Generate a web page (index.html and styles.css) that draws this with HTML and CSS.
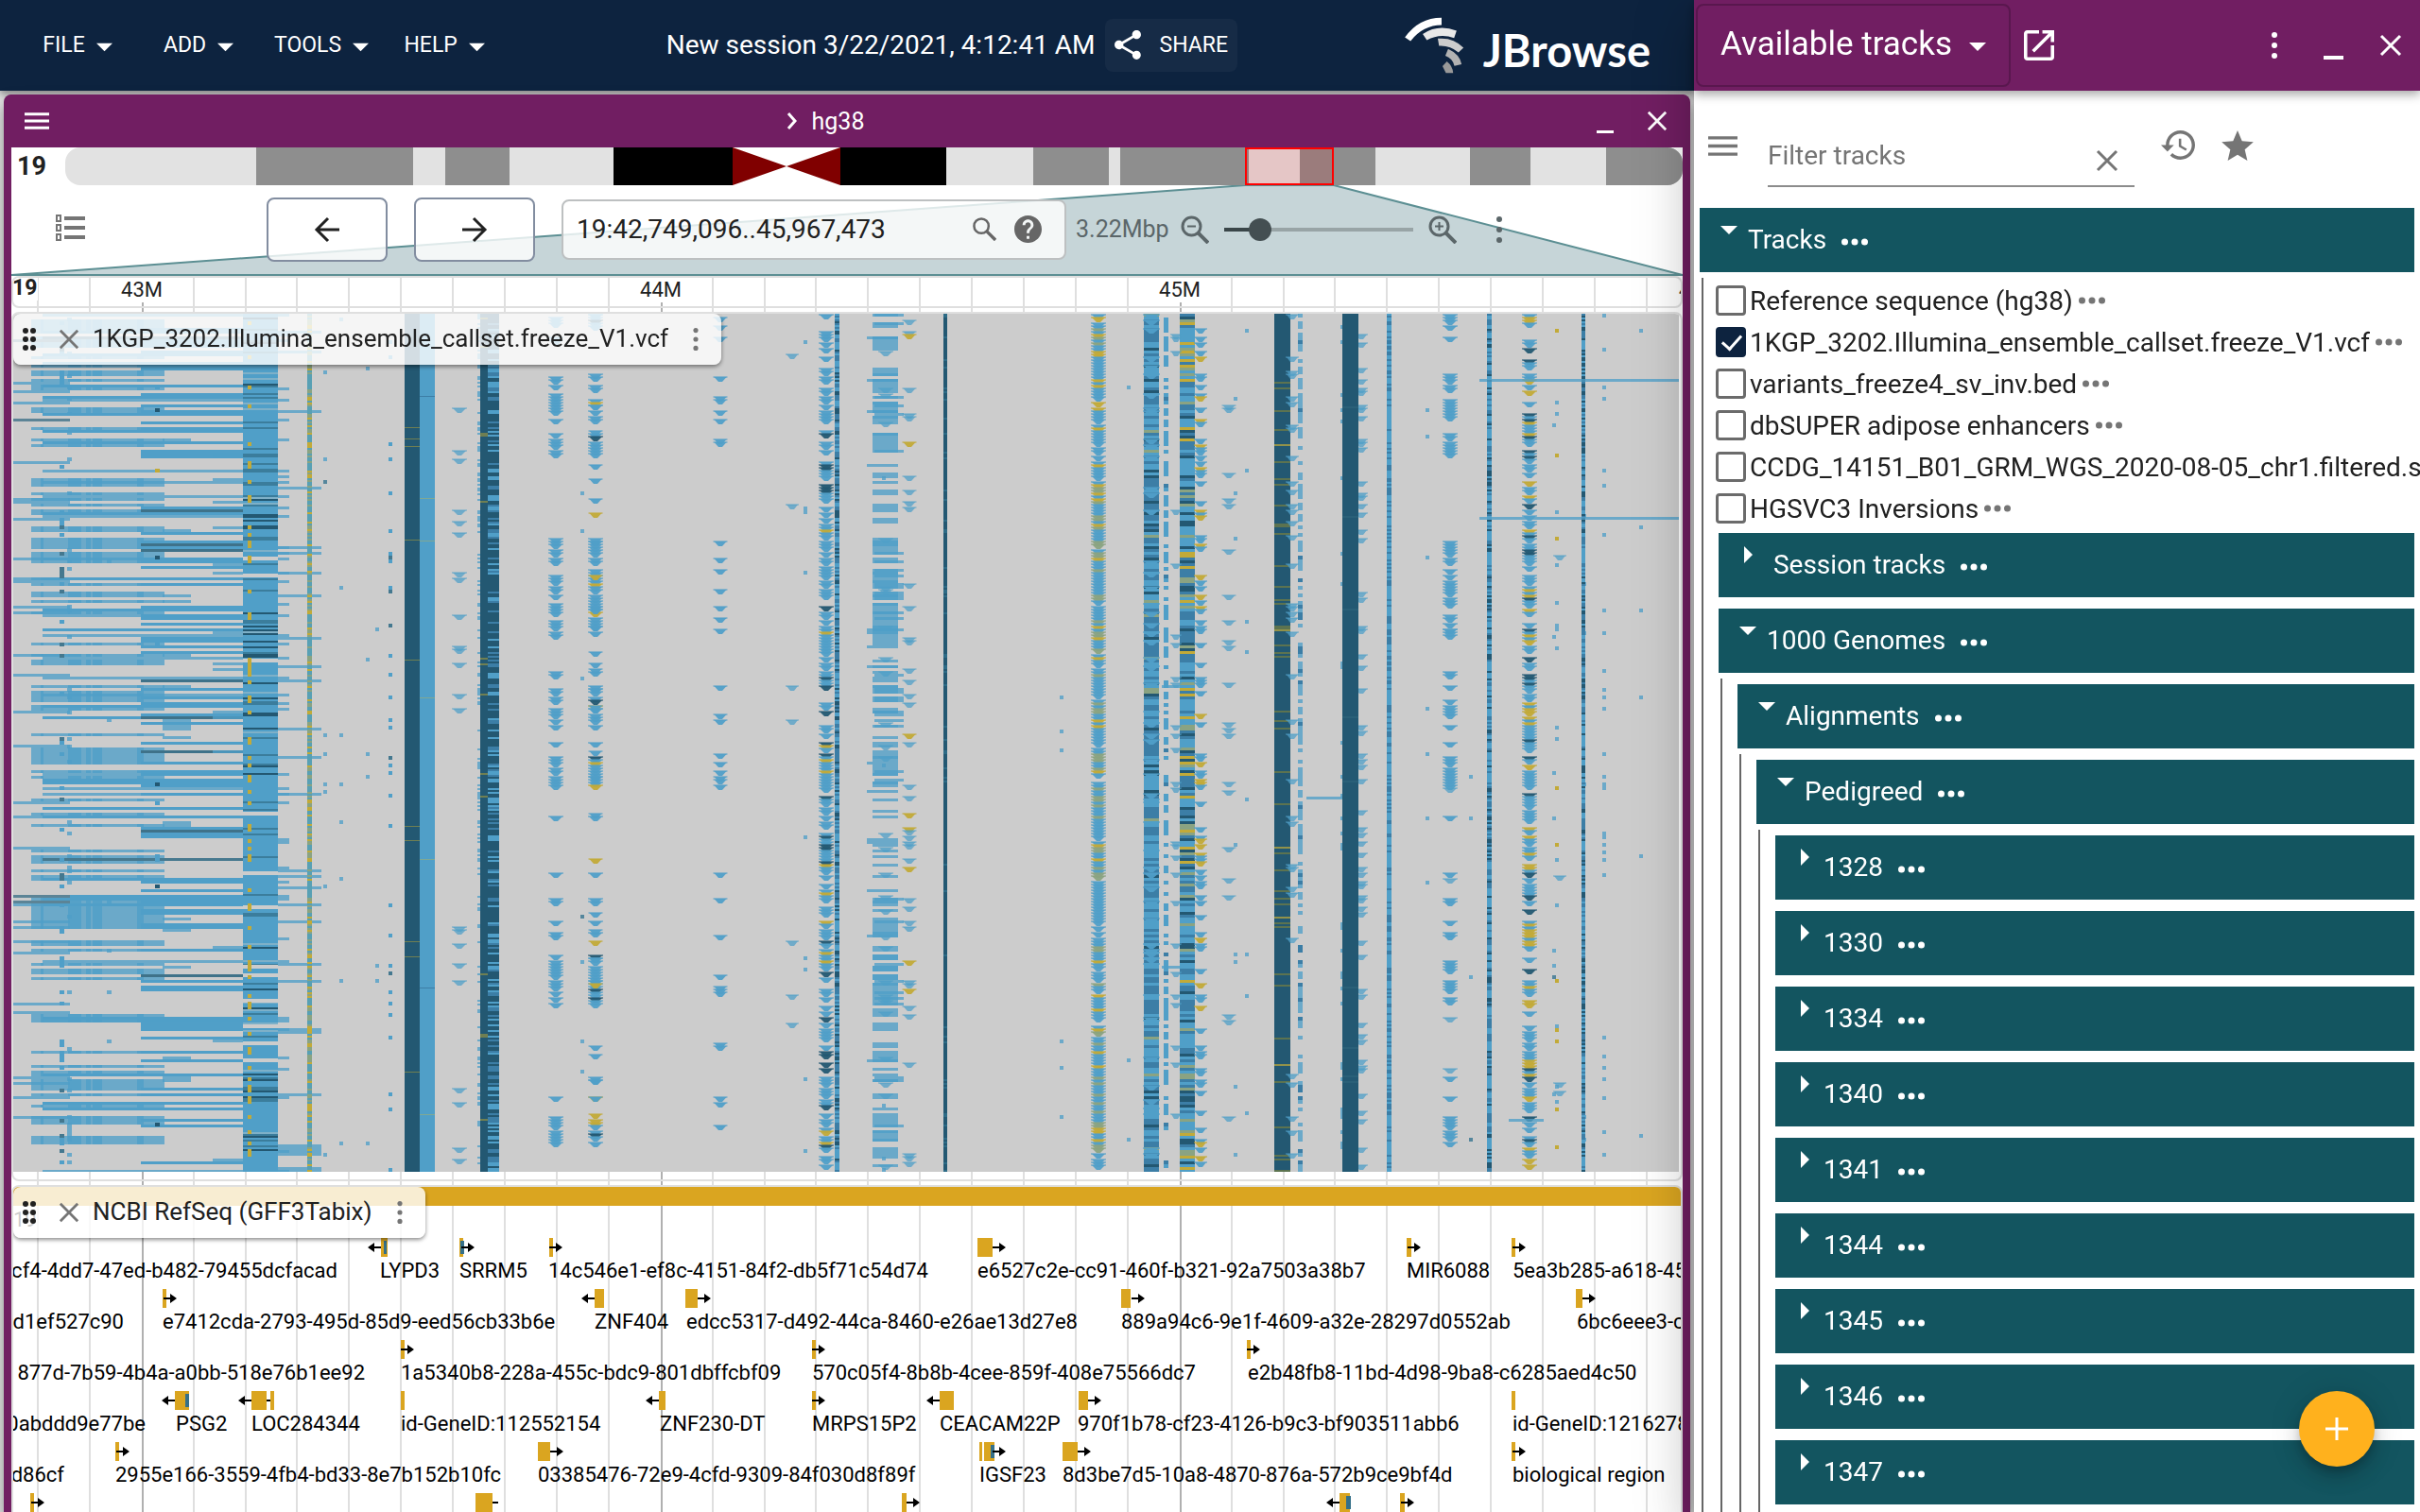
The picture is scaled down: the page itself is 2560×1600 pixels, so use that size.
FILE: index.html
```html
<!DOCTYPE html>
<html lang="en">
<head>
<meta charset="utf-8">
<title>JBrowse</title>
<link rel="stylesheet" href="styles.css">
</head>
<body>
<svg class="defs" aria-hidden="true">
  <symbol id="caret-down" viewBox="0 0 18 18"><path d="M0 5h18l-9 9z"/></symbol>
  <symbol id="caret-right" viewBox="0 0 18 18"><path d="M5 0l9 9-9 9z"/></symbol>
  <symbol id="close" viewBox="0 0 24 24"><path d="M2 2l20 20M22 2L2 22" fill="none" stroke="currentColor" stroke-width="3"/></symbol>
  <symbol id="menu" viewBox="0 0 18 12"><path d="M0 0h18v2H0zM0 5h18v2H0zM0 10h18v2H0z"/></symbol>
  <symbol id="kebab" viewBox="0 0 6 28"><circle cx="3" cy="3" r="3"/><circle cx="3" cy="14" r="3"/><circle cx="3" cy="25" r="3"/></symbol>
  <symbol id="dots" viewBox="0 0 28 8"><circle cx="3.5" cy="4" r="3.5"/><circle cx="14" cy="4" r="3.5"/><circle cx="24.5" cy="4" r="3.5"/></symbol>
  <symbol id="grip" viewBox="0 0 14 24"><circle cx="3" cy="3" r="3"/><circle cx="11" cy="3" r="3"/><circle cx="3" cy="12" r="3"/><circle cx="11" cy="12" r="3"/><circle cx="3" cy="21" r="3"/><circle cx="11" cy="21" r="3"/></symbol>
  <symbol id="arr" viewBox="0 0 14 12"><path d="M0 5h7V1l7 5-7 5V7H0z"/></symbol>
  <symbol id="arl" viewBox="0 0 14 12"><path d="M14 5H7V1L0 6l7 5V7h7z"/></symbol>
</svg>
<div class="app">
  <main class="workspace">
    <header class="appbar">
      <nav class="menus">
        <button class="menu-btn">FILE<svg class="menu-caret"><use href="#caret-down"/></svg></button>
        <button class="menu-btn">ADD<svg class="menu-caret"><use href="#caret-down"/></svg></button>
        <button class="menu-btn">TOOLS<svg class="menu-caret"><use href="#caret-down"/></svg></button>
        <button class="menu-btn">HELP<svg class="menu-caret"><use href="#caret-down"/></svg></button>
      </nav>
      <div class="session">
        <span class="session-name">New session 3/22/2021, 4:12:41 AM</span>
        <button class="share-btn"><svg class="share-icon" viewBox="3 2 18 20"><path d="M18 16.08c-.76 0-1.44.3-1.96.77L8.91 12.7c.05-.23.09-.46.09-.7s-.04-.47-.09-.7l7.05-4.11c.54.5 1.25.81 2.04.81 1.66 0 3-1.34 3-3s-1.34-3-3-3-3 1.34-3 3c0 .24.04.47.09.7L8.04 9.81C7.5 9.31 6.79 9 6 9c-1.66 0-3 1.34-3 3s1.34 3 3 3c.79 0 1.5-.31 2.04-.81l7.12 4.16c-.05.21-.08.43-.08.65 0 1.61 1.31 2.92 2.92 2.92s2.92-1.31 2.92-2.92-1.31-2.92-2.92-2.92z"/></svg>SHARE</button>
      </div>
      <div class="logo">
        <svg class="logo-mark" viewBox="48 61 189 181">
          <path fill="#fff" d="M48 126Q92 63 165 63V87Q106 87 66 138Z"/>
          <path fill="#e8e8e8" d="M105 115Q155 82 213 105L205 128Q160 112 118 135Z"/>
          <path fill="#ccc" d="M153 130Q202 125 235 159L219 174Q192 151 157 153Z"/>
          <path fill="#b2b2b2" d="M186 163Q223 180 229 212L206 217Q200 193 177 185Z"/>
          <path fill="#999" d="M182 203Q200 217 202 240H179L168 218Z"/>
        </svg>
        <span class="logo-text">JBrowse</span>
      </div>
    </header>

    <section class="view">
      <div class="view-bar">
        <button class="icon-btn" aria-label="View menu"><svg class="view-menu"><use href="#menu"/></svg></button>
        <div class="view-title"><svg class="chevron" viewBox="0 0 11 18"><path d="M2 1l7 8-7 8" fill="none" stroke="currentColor" stroke-width="3"/></svg>hg38</div>
        <div class="view-actions">
          <button class="icon-btn" aria-label="Minimize"><span class="minimize"></span></button>
          <button class="icon-btn" aria-label="Close view"><svg class="close-icon"><use href="#close"/></svg></button>
        </div>
      </div>
      <div class="view-body">
        <div class="ideogram">
          <span class="chrom">19</span>
          <svg class="bands" viewBox="0 0 1711 40" preserveAspectRatio="none">
            <clipPath id="ends"><rect width="1711" height="40" rx="16"/></clipPath>
            <g clip-path="url(#ends)">
              <path fill="#e2e2e2" d="M0 0H580V40H0zM932 0H1711V40H932z"/>
              <path fill="#8e8e8e" d="M202 0h166v40H202zM402 0h68v40h-68zM1024 0h80v40h-80zM1116 0h136v40h-136zM1306 0h80v40h-80zM1486 0h64v40h-64zM1630 0h81v40h-81z"/>
              <path fill="#000" d="M580 0h126v40H580zM820 0h112v40H820z"/>
              <path fill="#800000" d="M706 0l57 20-57 20zM820 0l-57 20 57 20z"/>
            </g>
            <rect x="1249" y="1" width="92" height="38" fill="#ff0000" fill-opacity=".12" stroke="#f00" stroke-width="2"/>
          </svg>
        </div>
        <div class="controls">
          <svg class="wedge" viewBox="0 0 1768 96" preserveAspectRatio="none"><path d="M1305 0H1399L1768 95H0z" fill="#c6d5d8" stroke="#5c8f93" stroke-width="2"/></svg>
          <button class="icon-btn list-btn" aria-label="Open track selector"><svg class="list-icon" viewBox="0 0 31 28"><path d="M9 2h22v4H9zM9 12h22v4H9zM9 22h22v4H9z"/><path d="M1 1h4v6H1zM1 11h4v6H1zM1 21h4v6H1z" fill="none" stroke="currentColor" stroke-width="2"/></svg></button>
          <button class="pan-btn" aria-label="Pan left"><svg class="pan-icon" viewBox="0 0 28 28"><path d="M27 14H3M15 2L3 14l12 12" fill="none" stroke="currentColor" stroke-width="3"/></svg></button>
          <button class="pan-btn" aria-label="Pan right"><svg class="pan-icon" viewBox="0 0 28 28"><path d="M1 14h24M13 2l12 12-12 12" fill="none" stroke="currentColor" stroke-width="3"/></svg></button>
          <div class="search">
            <input class="search-input" aria-label="Location" value="19:42,749,096..45,967,473">
            <svg class="search-icon" viewBox="0 0 26 26"><circle cx="9.500" cy="9.500" r="8" fill="none" stroke="currentColor" stroke-width="2.600"/><path d="M15 15l10 10" stroke="currentColor" stroke-width="3.500"/></svg>
            <svg class="help-icon" viewBox="2 2 20 20"><path d="M12 2C6.480 2 2 6.480 2 12s4.480 10 10 10 10-4.480 10-10S17.520 2 12 2zm1 17h-2v-2h2v2zm2.070-7.750l-.9.920C13.450 12.900 13 13.500 13 15h-2v-.5c0-1.100.45-2.100 1.170-2.830l1.240-1.260c.37-.36.59-.86.59-1.410 0-1.100-.9-2-2-2s-2 .9-2 2H8c0-2.210 1.790-4 4-4s4 1.790 4 4c0 .88-.36 1.680-.93 2.250z"/></svg>
          </div>
          <span class="span-size">3.22Mbp</span>
          <button class="icon-btn" aria-label="Zoom out"><svg class="zoom-icon" viewBox="0 0 30 30"><circle cx="11.500" cy="11.500" r="9.500" fill="none" stroke="currentColor" stroke-width="3"/><path d="M18 18l11 11" stroke="currentColor" stroke-width="4"/><path d="M7 11.500h9" stroke="currentColor" stroke-width="2"/></svg></button>
          <input class="zoom-slider" type="range" aria-label="Zoom" min="0" max="100" value="15">
          <button class="icon-btn" aria-label="Zoom in"><svg class="zoom-icon" viewBox="0 0 30 30"><circle cx="11.500" cy="11.500" r="9.500" fill="none" stroke="currentColor" stroke-width="3"/><path d="M18 18l11 11" stroke="currentColor" stroke-width="4"/><path d="M7 11.500h9M11.500 7v9" stroke="currentColor" stroke-width="2"/></svg></button>
          <button class="icon-btn more-btn" aria-label="More"><svg class="kebab"><use href="#kebab"/></svg></button>
        </div>
        <div class="tracks">
          <svg class="grid-lines" width="100%" height="100%">
            <pattern id="lines" patternUnits="userSpaceOnUse" x="138" y="0" width="549" height="40">
              <path fill="#dfdfdf" d="M54 0h2v40h-2zM109 0h2v40h-2zM163 0h2v40h-2zM218 0h2v40h-2zM273 0h2v40h-2zM328 0h2v40h-2zM383 0h2v40h-2zM438 0h2v40h-2zM493 0h2v40h-2z"/>
              <path fill="#b0b0b0" d="M0 0h2v40H0z"/>
            </pattern>
            <rect width="100%" height="100%" fill="url(#lines)"/>
          </svg>
          <div class="scalebar">
            <svg class="scale-svg" width="100%" height="30">
              <g class="scale-text"><rect class="mask" x="112" width="50" height="26"/><rect class="mask" x="661" width="50" height="26"/><rect class="mask" x="1210" width="50" height="26"/>
              <text x="136" y="20">43M</text><text x="685" y="20">44M</text><text x="1234" y="20">45M</text><text x="1784" y="20">46M</text>
              <rect class="mask" width="26" height="24"/><text class="scale-ref" x="-1" y="18">19</text></g>
            </svg>
          </div>
          <div class="track track-variants">
            <canvas class="heatmap" id="heatmap" role="img" aria-label="Variant genotypes"></canvas>
            <div class="track-label">
              <svg class="grip"><use href="#grip"/></svg>
              <button class="icon-btn dim" aria-label="Close track"><svg class="track-close"><use href="#close"/></svg></button>
              <span class="track-name">1KGP_3202.Illumina_ensemble_callset.freeze_V1.vcf</span>
              <button class="icon-btn dim" aria-label="Track menu"><svg class="track-kebab"><use href="#kebab"/></svg></button>
            </div>
          </div>
          <div class="track track-genes">
            <svg class="genes" width="100%" height="420">
              <rect class="g" x="0" y="0" width="100%" height="20"/>
              <text x="0" y="42">19</text>
              <g transform="translate(0 54)">
                <path class="g" d="M389 0h7v20h-7zM472 0h4v20h-4zM567 0h4v20h-4zM1020 0h16v20h-16zM1474 0h5v20h-5zM1585 0h4v20h-4z"/>
                <path class="u" d="M392 3h3v14h-3zM473 3h4v14h-4z"/>
                <use href="#arl" x="375" y="4" width="14" height="12"/><use href="#arr" x="474" y="4" width="14" height="12"/><use href="#arr" x="567" y="4" width="14" height="12"/><use href="#arr" x="1036" y="4" width="14" height="12"/><use href="#arr" x="1475" y="4" width="14" height="12"/><use href="#arr" x="1586" y="4" width="14" height="12"/>
                <text class="end" x="343" y="42">cf4-4dd7-47ed-b482-79455dcfacad</text><text x="388" y="42">LYPD3</text><text x="472" y="42">SRRM5</text><text x="566" y="42">14c546e1-ef8c-4151-84f2-db5f71c54d74</text><text x="1020" y="42">e6527c2e-cc91-460f-b321-92a7503a38b7</text><text x="1474" y="42">MIR6088</text><text x="1586" y="42">5ea3b285-a618-45c2</text>
              </g>
              <g transform="translate(0 108)">
                <path class="g" d="M158 0h4v20h-4zM615 0h10v20h-10zM711 0h13v20h-13zM1172 0h10v20h-10zM1653 0h7v20h-7z"/>
                <use href="#arr" x="159" y="4" width="14" height="12"/><use href="#arl" x="601" y="4" width="14" height="12"/><use href="#arr" x="724" y="4" width="14" height="12"/><use href="#arr" x="1183" y="4" width="14" height="12"/><use href="#arr" x="1660" y="4" width="14" height="12"/>
                <text class="end" x="117" y="42">d1ef527c90</text><text x="158" y="42">e7412cda-2793-495d-85d9-eed56cb33b6e</text><text x="615" y="42">ZNF404</text><text x="712" y="42">edcc5317-d492-44ca-8460-e26ae13d27e8</text><text x="1172" y="42">889a94c6-9e1f-4609-a32e-28297d0552ab</text><text x="1654" y="42">6bc6eee3-c4f1</text>
              </g>
              <g transform="translate(0 162)">
                <path class="g" d="M410 0h4v20h-4zM845 0h4v20h-4zM1305 0h4v20h-4z"/>
                <use href="#arr" x="410" y="4" width="14" height="12"/><use href="#arr" x="845" y="4" width="14" height="12"/><use href="#arr" x="1305" y="4" width="14" height="12"/>
                <text class="end" x="372" y="42">877d-7b59-4b4a-a0bb-518e76b1ee92</text><text x="410" y="42">1a5340b8-228a-455c-bdc9-801dbffcbf09</text><text x="845" y="42">570c05f4-8b8b-4cee-859f-408e75566dc7</text><text x="1306" y="42">e2b48fb8-11bd-4d98-9ba8-c6285aed4c50</text>
              </g>
              <g transform="translate(0 216)">
                <path class="g" d="M171 0h15v20h-15zM252 0h16v20h-16zM272 0h4v20h-4zM410 0h4v20h-4zM683 0h7v20h-7zM845 0h4v20h-4zM980 0h15v20h-15zM1127 0h10v20h-10zM1585 0h4v20h-4z"/>
                <path class="u" d="M182 3h4v14h-4z"/><path d="M268 9h4v2h-4z"/>
                <use href="#arl" x="157" y="4" width="14" height="12"/><use href="#arl" x="238" y="4" width="14" height="12"/><use href="#arl" x="669" y="4" width="14" height="12"/><use href="#arr" x="845" y="4" width="14" height="12"/><use href="#arl" x="966" y="4" width="14" height="12"/><use href="#arr" x="1137" y="4" width="14" height="12"/>
                <text class="end" x="140" y="42">0abddd9e77be</text><text x="172" y="42">PSG2</text><text x="252" y="42">LOC284344</text><text x="410" y="42">id-GeneID:112552154</text><text x="684" y="42">ZNF230-DT</text><text x="845" y="42">MRPS15P2</text><text x="980" y="42">CEACAM22P</text><text x="1126" y="42">970f1b78-cf23-4126-b9c3-bf903511abb6</text><text x="1586" y="42">id-GeneID:121627896</text>
              </g>
              <g transform="translate(0 270)">
                <path class="g" d="M108 0h4v20h-4zM555 0h13v20h-13zM1022 0h3v20h-3zM1027 0h11v20h-11zM1110 0h16v20h-16zM1585 0h4v20h-4z"/>
                <path class="u" d="M1034 3h4v14h-4z"/>
                <use href="#arr" x="109" y="4" width="14" height="12"/><use href="#arr" x="568" y="4" width="14" height="12"/><use href="#arr" x="1036" y="4" width="14" height="12"/><use href="#arr" x="1126" y="4" width="14" height="12"/><use href="#arr" x="1586" y="4" width="14" height="12"/>
                <text class="end" x="54" y="42">d86cf</text><text x="108" y="42">2955e166-3559-4fb4-bd33-8e7b152b10fc</text><text x="555" y="42">03385476-72e9-4cfd-9309-84f030d8f89f</text><text x="1022" y="42">IGSF23</text><text x="1110" y="42">8d3be7d5-10a8-4870-876a-572b9ce9bf4d</text><text x="1586" y="42">biological region</text>
              </g>
              <g transform="translate(0 324)">
                <path class="g" d="M18 0h4v20h-4zM489 0h18v20h-18zM940 0h5v20h-5zM1403 0h11v20h-11zM1467 0h5v20h-5z"/>
                <path class="u" d="M1410 3h5v14h-5z"/><path d="M507 9h6v2h-6z"/>
                <use href="#arr" x="19" y="4" width="14" height="12"/><use href="#arr" x="945" y="4" width="14" height="12"/><use href="#arl" x="1389" y="4" width="14" height="12"/><use href="#arr" x="1468" y="4" width="14" height="12"/>
              </g>
            </svg>
            <div class="track-label">
              <svg class="grip"><use href="#grip"/></svg>
              <button class="icon-btn dim" aria-label="Close track"><svg class="track-close"><use href="#close"/></svg></button>
              <span class="track-name">NCBI RefSeq (GFF3Tabix)</span>
              <button class="icon-btn dim" aria-label="Track menu"><svg class="track-kebab"><use href="#kebab"/></svg></button>
            </div>
          </div>
        </div>
      </div>
    </section>
  </main>

  <aside class="drawer">
    <header class="drawer-bar">
      <button class="drawer-select">Available tracks<svg class="drawer-caret"><use href="#caret-down"/></svg></button>
      <button class="icon-btn" aria-label="Pop out"><svg class="launch" viewBox="3 3 18 18"><path d="M19 19H5V5h7V3H5c-1.110 0-2 .9-2 2v14c0 1.100.89 2 2 2h14c1.100 0 2-.9 2-2v-7h-2v7zM14 3v2h3.590l-9.830 9.830 1.410 1.410L19 6.410V10h2V3h-7z"/></svg></button>
      <div class="drawer-actions">
        <button class="icon-btn" aria-label="Drawer menu"><svg class="kebab"><use href="#kebab"/></svg></button>
        <button class="icon-btn" aria-label="Minimize drawer"><span class="minimize minimize-lg"></span></button>
        <button class="icon-btn" aria-label="Close drawer"><svg class="drawer-close"><use href="#close"/></svg></button>
      </div>
    </header>
    <div class="filter-row">
      <button class="icon-btn dim" aria-label="Selector menu"><svg class="filter-menu"><use href="#menu"/></svg></button>
      <div class="filter-field">
        <input class="filter-input" aria-label="Filter tracks" placeholder="Filter tracks">
        <button class="icon-btn dim" aria-label="Clear"><svg class="filter-clear"><use href="#close"/></svg></button>
      </div>
      <button class="icon-btn dim" aria-label="Recently used"><svg class="history" viewBox="1 3 21 18"><path d="M13 3c-4.970 0-9 4.030-9 9H1l3.890 3.890.07.140L9 12H6c0-3.870 3.130-7 7-7s7 3.130 7 7-3.130 7-7 7c-1.930 0-3.680-.79-4.940-2.060l-1.420 1.420C8.270 19.990 10.510 21 13 21c4.970 0 9-4.030 9-9s-4.030-9-9-9zm-1 5v5l4.280 2.540.72-1.210-3.500-2.080V8H12z"/></svg></button>
      <button class="icon-btn dim" aria-label="Favorites"><svg class="star" viewBox="2 2 20 19"><path d="M12 17.270L18.180 21l-1.640-7.030L22 9.240l-7.190-.61L12 2 9.190 8.630 2 9.240l5.460 4.730L5.820 21z"/></svg></button>
    </div>

    <div class="tree">
      <div class="group"><button class="toggle"><svg class="caret"><use href="#caret-down"/></svg>Tracks</button><button class="icon-btn" aria-label="Tracks menu"><svg class="dots"><use href="#dots"/></svg></button></div>
      <div class="branch">
        <div class="leaf"><input type="checkbox" class="check" id="t1"><label for="t1">Reference sequence (hg38)</label><button class="icon-btn dim" aria-label="Track options"><svg class="dots"><use href="#dots"/></svg></button></div>
        <div class="leaf"><input type="checkbox" class="check" id="t2" checked><label for="t2">1KGP_3202.Illumina_ensemble_callset.freeze_V1.vcf</label><button class="icon-btn dim" aria-label="Track options"><svg class="dots"><use href="#dots"/></svg></button></div>
        <div class="leaf"><input type="checkbox" class="check" id="t3"><label for="t3">variants_freeze4_sv_inv.bed</label><button class="icon-btn dim" aria-label="Track options"><svg class="dots"><use href="#dots"/></svg></button></div>
        <div class="leaf"><input type="checkbox" class="check" id="t4"><label for="t4">dbSUPER adipose enhancers</label><button class="icon-btn dim" aria-label="Track options"><svg class="dots"><use href="#dots"/></svg></button></div>
        <div class="leaf"><input type="checkbox" class="check" id="t5"><label for="t5">CCDG_14151_B01_GRM_WGS_2020-08-05_chr1.filtered.s</label></div>
        <div class="leaf"><input type="checkbox" class="check" id="t6"><label for="t6">HGSVC3 Inversions</label><button class="icon-btn dim" aria-label="Track options"><svg class="dots"><use href="#dots"/></svg></button></div>
        <div class="group"><button class="toggle"><svg class="caret"><use href="#caret-right"/></svg>&nbsp;Session tracks</button><button class="icon-btn" aria-label="Session tracks menu"><svg class="dots"><use href="#dots"/></svg></button></div>
        <div class="group"><button class="toggle"><svg class="caret"><use href="#caret-down"/></svg>1000 Genomes</button><button class="icon-btn" aria-label="1000 Genomes menu"><svg class="dots"><use href="#dots"/></svg></button></div>
        <div class="branch">
          <div class="group"><button class="toggle"><svg class="caret"><use href="#caret-down"/></svg>Alignments</button><button class="icon-btn" aria-label="Alignments menu"><svg class="dots"><use href="#dots"/></svg></button></div>
          <div class="branch">
            <div class="group"><button class="toggle"><svg class="caret"><use href="#caret-down"/></svg>Pedigreed</button><button class="icon-btn" aria-label="Pedigreed menu"><svg class="dots"><use href="#dots"/></svg></button></div>
            <div class="branch">
              <div class="group"><button class="toggle"><svg class="caret"><use href="#caret-right"/></svg>1328</button><button class="icon-btn" aria-label="1328 menu"><svg class="dots"><use href="#dots"/></svg></button></div>
              <div class="group"><button class="toggle"><svg class="caret"><use href="#caret-right"/></svg>1330</button><button class="icon-btn" aria-label="1330 menu"><svg class="dots"><use href="#dots"/></svg></button></div>
              <div class="group"><button class="toggle"><svg class="caret"><use href="#caret-right"/></svg>1334</button><button class="icon-btn" aria-label="1334 menu"><svg class="dots"><use href="#dots"/></svg></button></div>
              <div class="group"><button class="toggle"><svg class="caret"><use href="#caret-right"/></svg>1340</button><button class="icon-btn" aria-label="1340 menu"><svg class="dots"><use href="#dots"/></svg></button></div>
              <div class="group"><button class="toggle"><svg class="caret"><use href="#caret-right"/></svg>1341</button><button class="icon-btn" aria-label="1341 menu"><svg class="dots"><use href="#dots"/></svg></button></div>
              <div class="group"><button class="toggle"><svg class="caret"><use href="#caret-right"/></svg>1344</button><button class="icon-btn" aria-label="1344 menu"><svg class="dots"><use href="#dots"/></svg></button></div>
              <div class="group"><button class="toggle"><svg class="caret"><use href="#caret-right"/></svg>1345</button><button class="icon-btn" aria-label="1345 menu"><svg class="dots"><use href="#dots"/></svg></button></div>
              <div class="group"><button class="toggle"><svg class="caret"><use href="#caret-right"/></svg>1346</button><button class="icon-btn" aria-label="1346 menu"><svg class="dots"><use href="#dots"/></svg></button></div>
              <div class="group"><button class="toggle"><svg class="caret"><use href="#caret-right"/></svg>1347</button><button class="icon-btn" aria-label="1347 menu"><svg class="dots"><use href="#dots"/></svg></button></div>
            </div>
          </div>
        </div>
      </div>
    </div>
    <button class="fab" aria-label="Add track"><svg class="plus" viewBox="0 0 24 24"><path d="M12 0v24M0 12h24" stroke="currentColor" stroke-width="3"/></svg></button>
  </aside>
</div>
<script src="heatmap.js"></script>
</body>
</html>
```
FILE: styles.css
```css
* { box-sizing: border-box; }
body { margin: 0; font-family: Roboto, "Liberation Sans", sans-serif; font-size: 28px; color: #212121; background: #fff; }
svg { display: block; fill: currentColor; flex: none; }
button, input { font: inherit; color: inherit; margin: 0; }
button { border: 0; background: none; padding: 0; cursor: pointer; }
.defs { position: absolute; width: 0; height: 0; }
.icon-btn { display: flex; align-items: center; flex: none; }
.dim { color: #757575; }

.app { display: flex; height: 100vh; overflow: hidden; }
.workspace { flex: 1; min-width: 0; display: flex; flex-direction: column; gap: 4px; background: #e4e4e4; }

.appbar { flex: none; height: 96px; display: flex; align-items: center; justify-content: space-between; padding: 0 46px 0 24px; background: #0d233f; color: #fff; box-shadow: 0 4px 8px rgba(0, 0, 0, .4); }
.menus { display: flex; padding-bottom: 2px; }
.menu-btn { display: flex; align-items: center; justify-content: center; min-width: 128px; padding: 0 10px; font-size: 23px; }
.menu-caret { width: 17px; height: 17px; margin: 4px 12px 0; }
.session { display: flex; align-items: center; gap: 10px; padding-right: 12px; }
.session-name { padding-bottom: 2px; white-space: nowrap; }
.share-btn { display: flex; align-items: center; gap: 20px; height: 56px; padding: 0 10px 2px; font-size: 23px; background: #162b46; border-radius: 8px; }
.share-icon { width: 28px; height: 31px; }
.logo { display: flex; align-items: center; gap: 20px; }
.logo-mark { width: 63px; height: 60px; }
.logo-text { font-family: Lato, sans-serif; font-weight: 700; font-size: 47px; line-height: 60px; padding-top: 10px; }

.view { flex: 1; min-height: 0; display: flex; flex-direction: column; margin: 0 4px; border: solid #711e62; border-width: 0 8px; background: #711e62; border-radius: 8px 8px 0 0; box-shadow: 0 8px 16px rgba(0, 0, 0, .4); }
.view-bar { flex: none; height: 56px; display: grid; grid-template-columns: 1fr auto 1fr; align-items: center; padding: 0 16px 0 14px; color: #fff; }
.view-menu { width: 26px; height: 18px; }
.view-title { display: flex; align-items: center; gap: 16px; padding-right: 44px; font-size: 25px; }
.chevron { width: 11px; height: 18px; }
.view-actions { display: flex; align-items: center; justify-content: flex-end; gap: 35px; }
.minimize { width: 18px; height: 3px; margin-top: 22px; background: currentColor; }
.minimize-lg { width: 21px; height: 4px; margin-top: 26px; }
.close-icon { width: 22px; height: 22px; }
.view-body { flex: 1; min-height: 0; display: flex; flex-direction: column; background: #fff; overflow: hidden; }

.ideogram { flex: none; height: 40px; display: flex; align-items: center; }
.chrom { width: 57px; padding-left: 6px; font-weight: 700; font-size: 27px; }
.bands { flex: 1; min-width: 0; height: 40px; }

.controls { flex: none; position: relative; height: 96px; display: flex; align-items: center; padding: 0 0 2px 47px; }
.wedge { position: absolute; inset: 0; width: 100%; height: 96px; }
.controls > :not(.wedge) { position: relative; }
.controls > .icon-btn, .span-size { color: #5b6669; }
.controls > .list-btn { margin-right: 192px; padding-bottom: 4px; color: #757575; }
.list-icon { width: 31px; height: 28px; }
.pan-btn { display: flex; align-items: center; justify-content: center; width: 128px; height: 68px; margin-right: 28px; border: 2px solid #828da0; border-radius: 8px; background: rgba(255, 255, 255, .8); }
.pan-icon { width: 28px; height: 28px; }
.search { display: flex; align-items: center; width: 534px; height: 64px; padding: 0 24px 2px 14px; border: 2px solid #bdc0c1; border-radius: 8px; background: rgba(255, 255, 255, .8); color: #666; }
.search-input { flex: 1; min-width: 0; padding: 0; border: 0; background: none; color: #212121; outline: 0; }
.search-icon { width: 25px; height: 25px; margin-right: 19px; }
.help-icon { width: 29px; height: 29px; }
.span-size { width: 111px; margin-left: 10px; padding-bottom: 2px; font-size: 25px; white-space: nowrap; }
.zoom-icon { width: 30px; height: 30px; }
.zoom-slider { appearance: none; width: 200px; height: 24px; margin: 0 16px; background: linear-gradient(90deg, #3a4649 19%, #98a4a6 19%) center / 100% 4px no-repeat; }
.zoom-slider::-webkit-slider-thumb { appearance: none; width: 24px; height: 24px; border-radius: 50%; background: #444f52; }
.more-btn { margin-left: 42px; }
.kebab { width: 6px; height: 28px; }

.tracks { position: relative; flex: 1; min-height: 0; display: flex; flex-direction: column; gap: 4px; overflow: hidden; }
.grid-lines { position: absolute; inset: 0; }
.scalebar { position: relative; flex: none; height: 34px; border: 2px solid #dfdfdf; border-radius: 8px; overflow: hidden; }
.scale-svg { display: block; }
.scale-text { font-size: 22px; fill: #212121; text-anchor: middle; }
.mask { fill: #fff; }
.scale-ref { font-weight: 700; font-size: 23px; text-anchor: start; }
.track { position: relative; flex: none; border: 2px solid #dfdfdf; border-radius: 8px; overflow: hidden; }
.track-variants { height: 920px; }
.heatmap { display: block; width: calc(100% - 2px); height: 908px; }
.track-genes { height: 424px; }
.genes { display: block; font-size: 22px; fill: #000; }
.genes .g { fill: #daa520; }
.genes .u { fill: #357089; }
.genes .end { text-anchor: end; }
.track-label { position: absolute; left: 0; top: 0; display: flex; align-items: center; height: 54px; padding: 0 24px 0 10px; font-size: 26px; white-space: nowrap; background: rgba(255, 255, 255, .8); border-radius: 8px; box-shadow: 0 2px 4px rgba(0, 0, 0, .45); }
.grip { width: 14px; height: 24px; margin-right: 24px; }
.track-close { width: 22px; height: 22px; margin-right: 14px; }
.track-name { margin-right: 26px; padding-bottom: 2px; }
.track-kebab { width: 6px; height: 24px; }

.drawer { position: relative; flex: none; width: 30%; display: flex; flex-direction: column; background: #fff; overflow: visible; box-shadow: 0 16px 20px -10px rgba(0, 0, 0, .2), 0 32px 48px 4px rgba(0, 0, 0, .14), 0 12px 60px 10px rgba(0, 0, 0, .12); }
.drawer-bar { flex: none; height: 96px; display: flex; align-items: center; padding: 0 19px 0 2px; background: #711e62; color: #fff; box-shadow: 0 4px 10px rgba(0, 0, 0, .35); }
.drawer-select { display: flex; align-items: center; height: 88px; padding: 0 24px 4px; margin-right: 14px; font-size: 35px; border: 2px solid #59174e; border-radius: 8px; }
.drawer-caret { width: 18px; height: 18px; margin: 6px 0 0 18px; }
.launch { width: 32px; height: 32px; }
.drawer-actions { margin-left: auto; display: flex; align-items: center; }
.drawer-actions .minimize { margin-left: 49px; margin-right: 38px; }
.drawer-close { width: 24px; height: 24px; }

.filter-row { flex: none; height: 118px; display: flex; align-items: flex-start; padding: 42px 0 0 15px; }
.filter-menu { width: 31px; height: 21px; margin: 6px 32px 0 0; }
.filter-field { display: flex; align-items: center; flex: none; width: 388px; height: 60px; margin-right: 28px; padding: 0 17px 6px 0; border-bottom: 2px solid #8c8c8c; }
.filter-input { flex: 1; min-width: 0; padding: 0; border: 0; outline: 0; background: none; }
.filter-input::placeholder { color: #757575; opacity: 1; }
.filter-clear { width: 24px; height: 24px; margin-top: 12px; }
.history { width: 36px; height: 31px; margin-right: 28px; }
.star { width: 34px; height: 32px; }

.tree { flex: 1; min-height: 0; padding-left: 6px; overflow: hidden; }
.group { display: flex; align-items: center; height: 68px; margin: 6px 6px 12px 0; background: #135560; color: #fff; white-space: nowrap; }
.toggle { display: flex; align-items: center; height: 100%; padding: 0 16px 2px 22px; }
.caret { width: 18px; height: 18px; margin: 14px 11px 0 0; align-self: flex-start; }
.dots { width: 28px; height: 8px; margin-top: 4px; }
.branch { display: flow-root; margin: -6px 0 0 2px; padding-left: 16px; border-left: 2px solid #666; }
.leaf { display: flex; align-items: center; height: 44px; padding-top: 4px; margin-left: -3px; white-space: nowrap; }
.leaf .dots { margin: 0 0 0 6px; }
.check { appearance: none; position: relative; flex: none; width: 32px; height: 32px; margin-right: 4px; border: 3px solid #6b6b6b; border-radius: 4px; background: #fff; }
.check:checked { border-color: #0d233f; background: #0d233f; }
.check:checked::after { content: ""; position: absolute; left: 8px; top: 1px; width: 9px; height: 17px; border: solid #fff; border-width: 0 3px 3px 0; transform: rotate(42deg); }

.fab { position: absolute; right: 48px; bottom: 48px; display: flex; align-items: center; justify-content: center; width: 80px; height: 80px; border-radius: 50%; background: #ffb11d; color: #fff; box-shadow: 0 6px 10px -2px rgba(0, 0, 0, .2), 0 12px 20px rgba(0, 0, 0, .14), 0 2px 36px rgba(0, 0, 0, .12); }
.plus { width: 24px; height: 24px; }
```
FILE: heatmap.js
```js
// Genotype matrix: one row per sample, one column per structural variant.
const canvas = document.getElementById('heatmap');
const W = canvas.width = canvas.clientWidth;
const H = canvas.height = canvas.clientHeight;
const c = canvas.getContext('2d');
const BG = '#cccccc', BLUE = '#509fc8', SOFT = 'rgba(80,159,200,.78)';
const DARK = '#235872', MID = '#3c7ea6', GOLD = '#c2aa38', OLIVE = '#8aa382';

let seed = 20210322;
function rnd() {
  seed = (seed * 1664525 + 1013904223) >>> 0;
  return seed / 4294967296;
}
function pick(mix) {
  let r = rnd();
  for (const [color, share] of mix) { if ((r -= share) < 0) return color; }
  return mix[0][0];
}
function box(x, y, w, h, color) { c.fillStyle = color; c.fillRect(x, y, w, h); }

box(0, 0, W, H, BG);

// Populations in which the commoner alleles occur, as [top, bottom] row spans.
const POP = [[0, 12], [24, 28], [61, 69], [75, 79], [82, 113], [126, 148], [236, 254], [258, 262], [268, 340],
  [378, 381], [392, 401], [405, 410], [413, 430], [433, 437], [451, 454], [466, 498], [529, 532], [589, 592],
  [618, 621], [641, 644], [654, 657], [676, 730], [807, 810], [827, 830], [848, 860], [864, 876]];
function inPop(y) { return POP.some(([a, b]) => y >= a && y <= b); }

// Solid or streaked column.
function strip(x, w, base, mix, share, step = 2) {
  if (base) box(x, 0, w, H, base);
  for (let y = 0; y < H; y += step) if (rnd() < share) box(x, y, w, step, pick(mix));
}
// Insertions are drawn as small downward wedges.
function wedge(x, y, w, color) {
  c.globalAlpha = .55; box(x - w / 2, y, w, 2, color); c.globalAlpha = .95;
  c.fillStyle = color;
  c.beginPath(); c.moveTo(x - w / 2 + 1, y + 1); c.lineTo(x + w / 2 - 1, y + 1); c.lineTo(x + 2, y + 6); c.lineTo(x - 2, y + 6); c.fill();
  c.globalAlpha = 1;
}
function wedges(x, w, share, mix, where) {
  for (let y = 0; y < H - 5; y += 3) if ((!where || where(y)) && rnd() < share) wedge(x, y, w, pick(mix));
}
function dots(x, share, mix, w = 5) {
  for (let y = 0; y < H; y += 4) if (rnd() < share) box(x, y, w, 4, pick(mix));
}
function bars(x, w, share, mix, where) {
  for (let y = 0; y < H; y += 3) if ((!where || where(y)) && rnd() < share) box(x, y, w, 3, pick(mix));
}

// Long deletions at the left edge come in runs of neighbouring samples.
const S = [[SOFT, 1]];
for (let y = 0; y < H; y += 3) {
  const run = .38 + .22 * Math.sin(y / 9) + .2 * Math.sin(y / 31);
  if (rnd() < run) {
    box(19, y, 141, 3, SOFT);
    for (const [x, w] of [[29, 3], [58, 14], [77, 5], [84, 10], [131, 7]]) box(x, y, w, 3, 'rgba(80,159,200,.8)');
  }
}
bars(31, 212, .08, [[BLUE, .9], ['#47798f', .1]]);
bars(0, 60, .13, [[SOFT, .95], ['#5c8496', .05]]);
bars(135, 108, .24, [[BLUE, .94], ['#3f7289', .06]]);
bars(31, 261, .04, S);
bars(158, 30, .08, S);
bars(211, 32, .08, S);
bars(280, 46, .07, S);
bars(280, 12, .08, S);
dots(49, .25, [[BLUE, .7], ['#44788f', .3]]);
dots(57, .15, S);
dots(150, .07, [[BLUE, .6], [GOLD, .2], [DARK, .2]]);
dots(99, .05, [[SOFT, .8], [GOLD, .2]]);
strip(243, 37, BLUE, [['#3b7d9c', .5], [DARK, .25], ['#7eb0c8', .25]], .25);
for (let y = 230; y < H; y += 9) if (rnd() < .14) box(243, y, 37, 4, BG);
dots(248, .3, [[GOLD, 1]], 4);
strip(311, 5, '#58a0b4', [[GOLD, .45], [OLIVE, .55]], .5);

for (const x of [328, 345, 373, 383, 600, 836, 919, 1107, 1178, 1291, 1303, 1340, 1494, 1540, 1628, 1660, 1720])
  dots(x, .03, [[SOFT, .95], ['#55869c', .05]], 4);
dots(397, .15, [[BLUE, .85], ['#44788f', .15]], 4);

strip(414, 16, DARK, [['#6f7f52', 1]], .01, 1);
strip(430, 16, BLUE, [['#7fa894', .7], [MID, .3]], .012, 1);
wedges(472, 16, .1, S);
strip(491, 3, '', S, .35);
strip(494, 8, DARK, [['#6f7f52', 1]], .02);
strip(502, 12, DARK, [[BLUE, .5], [MID, .5]], .42);

wedges(574, 16, .8, [[BLUE, 1]], inPop);
wedges(616, 16, .85, [[BLUE, .84], [GOLD, .08], [DARK, .08]], inPop);
wedges(616, 15, .15, [[BLUE, .9], [GOLD, .1]]);
wedges(748, 15, .2, [[BLUE, 1]], inPop);
wedges(748, 15, .03, [[BLUE, 1]]);
wedges(824, 14, .02, S);

wedges(860, 16, .62, [[BLUE, .8], [DARK, .12], [GOLD, .08]]);
strip(869, 5, MID, [[BLUE, .6], [DARK, .4]], .6);
bars(909, 27, .36, S);
bars(909, 27, .7, S, inPop);
wedges(923, 16, .1, S);
bars(903, 33, .05, S);
bars(911, 31, .3, S, inPop);
wedges(948, 15, .17, [[SOFT, .75], [GOLD, .25]]);
strip(984, 4, DARK, [['#2d6b86', 1]], .12);

wedges(1148, 16, .9, [[BLUE, .68], [GOLD, .14], [OLIVE, .18]]);
strip(1196, 16, BLUE, [[DARK, .2], [MID, .75], [OLIVE, .05]], .6, 3);
wedges(1204, 18, .2, [[BLUE, 1]]);
strip(1217, 5, '', [[BLUE, .9], [MID, .1]], .62, 4);
strip(1234, 16, BLUE, [[MID, .4], [OLIVE, .22], [DARK, .25], [GOLD, .13]], .62, 3);
wedges(1230, 12, .08, S);
wedges(1256, 14, .32, [[BLUE, .68], [GOLD, .32]]);
wedges(1286, 15, .08, S);
bars(1215, 20, .02, S);

strip(1334, 17, DARK, [['#5c7350', .8], ['#91924a', .2]], .1);
wedges(1353, 14, .14, S);
strip(1359, 5, '', [[SOFT, .85], [MID, .15]], .62, 4);
strip(1404, 3, '', S, .15, 4);
wedges(1426, 14, .2, S);
strip(1406, 17, DARK, [['#2a6078', 1]], .02);
strip(1453, 5, BLUE, [[MID, 1]], .35);
wedges(1520, 16, .75, [[BLUE, 1]], inPop);
wedges(1520, 16, .02, S);
strip(1559, 5, BLUE, [[MID, .6], [DARK, .4]], .5);
wedges(1604, 16, .66, [[BLUE, .66], [GOLD, .18], [DARK, .16]]);
bars(1582, 37, .008, S);
dots(1631, .09, [[GOLD, .5], [SOFT, .5]], 4);
dots(1681, .12, S, 4);
wedges(1636, 14, .02, S);
strip(1659, 4, BLUE, [[MID, .5], [DARK, .5]], .6);

box(1551, 69, W - 1551, 3, SOFT);
box(1551, 215, W - 1551, 3, SOFT);
box(1368, 511, 38, 3, SOFT);
```
